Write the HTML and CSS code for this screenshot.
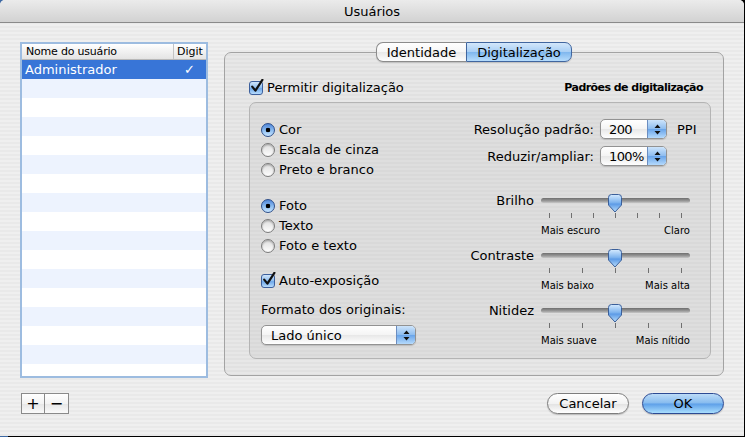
FILE: index.html
```html
<!DOCTYPE html>
<html lang="pt">
<head>
    <meta charset="UTF-8">
    <title>Usuários</title>
    <link rel="stylesheet" href="styles.css">
</head>
<body>
    <div class="window">
        <div class="titlebar">Usuários</div>

        <div class="content">
            <div class="users">
                <div class="user-list">
                    <div class="list-head">
                        <span class="col-name">Nome do usuário</span>
                        <span class="col-digit">Digit</span>
                    </div>
                    <div class="row selected">
                        <span class="col-name">Administrador</span>
                        <span class="col-digit">✓</span>
                    </div>
                    <div class="row"></div>
                    <div class="row"></div>
                    <div class="row"></div>
                    <div class="row"></div>
                    <div class="row"></div>
                    <div class="row"></div>
                    <div class="row"></div>
                    <div class="row"></div>
                    <div class="row"></div>
                    <div class="row"></div>
                    <div class="row"></div>
                    <div class="row"></div>
                    <div class="row"></div>
                    <div class="row"></div>
                    <div class="row"></div>
                    <div class="row"></div>
                </div>
                <div class="list-buttons">
                    <button class="square-button">+</button>
                    <button class="square-button">−</button>
                </div>
            </div>

            <div class="main">
                <div class="tabs">
                    <span class="tab tab-first">Identidade</span>
                    <span class="tab tab-last active">Digitalização</span>
                </div>
                <div class="tabbox">
                    <div class="scan-row">
                        <label class="option">
                            <span class="checkbox"><svg width="16" height="16" viewBox="0 0 16 16"><path d="M3.2 7.6 L6.4 11.6 L13.4 0.8" fill="none" stroke="#111" stroke-width="2.2" stroke-linecap="round" stroke-linejoin="round"/></svg></span>
                            Permitir digitalização
                        </label>
                        <span class="section-title">Padrões de digitalização</span>
                    </div>

                    <div class="group">
                        <div class="col-left">
                            <div class="option-group">
                                <label class="option"><span class="radio on"></span>Cor</label>
                                <label class="option"><span class="radio"></span>Escala de cinza</label>
                                <label class="option"><span class="radio"></span>Preto e branco</label>
                            </div>
                            <div class="option-group">
                                <label class="option"><span class="radio on"></span>Foto</label>
                                <label class="option"><span class="radio"></span>Texto</label>
                                <label class="option"><span class="radio"></span>Foto e texto</label>
                            </div>
                            <label class="option auto-exp">
                                <span class="checkbox"><svg width="16" height="16" viewBox="0 0 16 16"><path d="M3.2 7.6 L6.4 11.6 L13.4 0.8" fill="none" stroke="#111" stroke-width="2.2" stroke-linecap="round" stroke-linejoin="round"/></svg></span>
                                Auto-exposição
                            </label>
                            <div class="field-label">Formato dos originais:</div>
                            <div class="popup popup-wide">
                                <span class="popup-value">Lado único</span>
                                <span class="popup-arrows"><svg width="7" height="11" viewBox="0 0 7 11"><path d="M3.5 0.5 L6.5 4 H0.5 Z M3.5 10.5 L6.5 7 H0.5 Z" fill="#111"/></svg></span>
                            </div>
                        </div>

                        <div class="col-right">
                            <div class="popup-row">
                                <span class="row-label">Resolução padrão:</span>
                                <div class="popup">
                                    <span class="popup-value">200</span>
                                    <span class="popup-arrows"><svg width="7" height="11" viewBox="0 0 7 11"><path d="M3.5 0.5 L6.5 4 H0.5 Z M3.5 10.5 L6.5 7 H0.5 Z" fill="#111"/></svg></span>
                                </div>
                                <span class="unit">PPI</span>
                            </div>
                            <div class="popup-row second">
                                <span class="row-label">Reduzir/ampliar:</span>
                                <div class="popup">
                                    <span class="popup-value">100%</span>
                                    <span class="popup-arrows"><svg width="7" height="11" viewBox="0 0 7 11"><path d="M3.5 0.5 L6.5 4 H0.5 Z M3.5 10.5 L6.5 7 H0.5 Z" fill="#111"/></svg></span>
                                </div>
                            </div>

                            <div class="slider first">
                                <div class="slider-row">
                                    <span class="row-label">Brilho</span>
                                    <div class="track-cell">
                                        <div class="track"></div>
                                        <svg class="thumb" width="16" height="19" viewBox="0 0 16 19"><defs><linearGradient id="tg1" x1="0" y1="0" x2="0" y2="1"><stop offset="0" stop-color="#d6ebff"/><stop offset="0.45" stop-color="#7fb4ee"/><stop offset="0.55" stop-color="#5d9be6"/><stop offset="1" stop-color="#b9defc"/></linearGradient></defs><path d="M1.5 3.5 Q1.5 0.5 4.5 0.5 H11.5 Q14.5 0.5 14.5 3.5 V11 L8 18 L1.5 11 Z" fill="url(#tg1)" stroke="#3b5f99"/></svg>
                                    </div>
                                </div>
                                <div class="ticks-row">
                                    <span></span>
                                    <div class="ticks"><i></i><i></i><i></i><i></i><i></i><i></i><i></i></div>
                                </div>
                                <div class="ends-row">
                                    <span></span>
                                    <div class="ends"><span>Mais escuro</span><span>Claro</span></div>
                                </div>
                            </div>

                            <div class="slider">
                                <div class="slider-row">
                                    <span class="row-label">Contraste</span>
                                    <div class="track-cell">
                                        <div class="track"></div>
                                        <svg class="thumb" width="16" height="19" viewBox="0 0 16 19"><defs><linearGradient id="tg2" x1="0" y1="0" x2="0" y2="1"><stop offset="0" stop-color="#d6ebff"/><stop offset="0.45" stop-color="#7fb4ee"/><stop offset="0.55" stop-color="#5d9be6"/><stop offset="1" stop-color="#b9defc"/></linearGradient></defs><path d="M1.5 3.5 Q1.5 0.5 4.5 0.5 H11.5 Q14.5 0.5 14.5 3.5 V11 L8 18 L1.5 11 Z" fill="url(#tg2)" stroke="#3b5f99"/></svg>
                                    </div>
                                </div>
                                <div class="ticks-row">
                                    <span></span>
                                    <div class="ticks"><i></i><i></i><i></i><i></i><i></i></div>
                                </div>
                                <div class="ends-row">
                                    <span></span>
                                    <div class="ends"><span>Mais baixo</span><span>Mais alta</span></div>
                                </div>
                            </div>

                            <div class="slider">
                                <div class="slider-row">
                                    <span class="row-label">Nitidez</span>
                                    <div class="track-cell">
                                        <div class="track"></div>
                                        <svg class="thumb" width="16" height="19" viewBox="0 0 16 19"><defs><linearGradient id="tg3" x1="0" y1="0" x2="0" y2="1"><stop offset="0" stop-color="#d6ebff"/><stop offset="0.45" stop-color="#7fb4ee"/><stop offset="0.55" stop-color="#5d9be6"/><stop offset="1" stop-color="#b9defc"/></linearGradient></defs><path d="M1.5 3.5 Q1.5 0.5 4.5 0.5 H11.5 Q14.5 0.5 14.5 3.5 V11 L8 18 L1.5 11 Z" fill="url(#tg3)" stroke="#3b5f99"/></svg>
                                    </div>
                                </div>
                                <div class="ticks-row">
                                    <span></span>
                                    <div class="ticks"><i></i><i></i><i></i><i></i><i></i></div>
                                </div>
                                <div class="ends-row">
                                    <span></span>
                                    <div class="ends"><span>Mais suave</span><span>Mais nítido</span></div>
                                </div>
                            </div>
                        </div>
                    </div>
                </div>

                <div class="dialog-buttons">
                    <button class="pill">Cancelar</button>
                    <button class="pill default">OK</button>
                </div>
            </div>
        </div>
    </div>
</body>
</html>
```

FILE: styles.css
```css
* {
    box-sizing: border-box;
}
html, body {
    margin: 0;
}
body {
    width: 745px;
    height: 437px;
    overflow: hidden;
    background: linear-gradient(to right, #3d68a3 0, #3d68a3 8px, #000 8px);
    font-family: "DejaVu Sans", sans-serif;
    font-size: 13px;
    color: #000;
}
.window {
    width: 744px;
    height: 436px;
    border-radius: 5px 5px 0 0;
    overflow: hidden;
    background: repeating-linear-gradient(to bottom, #efefef 0, #efefef 2px, #e9e9e9 2px, #e9e9e9 4px);
}
.titlebar {
    height: 23px;
    line-height: 23px;
    text-align: center;
    background: linear-gradient(#ebebeb, #d2d2d2);
    border-bottom: 1px solid #8a8a8a;
}
.content {
    display: flex;
    gap: 16px;
    padding: 19px 0 0 20px;
}

/* user list */
.users {
    width: 188px;
}
.user-list {
    height: 336px;
    border: 2px solid #9dbce0;
    background: #fff;
    overflow: hidden;
}
.list-head {
    display: flex;
    height: 16px;
    font-size: 11px;
    line-height: 15px;
    background: linear-gradient(#fff, #f1f1f1 50%, #e4e4e4);
    border-bottom: 1px solid #b8b8b8;
}
.list-head .col-name {
    padding-left: 4px;
    letter-spacing: -0.2px;
}
.list-head .col-digit {
    border-left: 1px solid #c4c4c4;
    padding-left: 3px;
}
.col-name {
    flex: 1;
}
.col-digit {
    width: 33px;
}
.row {
    display: flex;
    height: 19px;
    line-height: 20px;
}
.row:nth-of-type(odd) {
    background: #edf3fe;
}
.row.selected {
    background: #3875d7;
    color: #fff;
}
.row .col-name {
    padding-left: 3px;
}
.row .col-digit {
    text-align: center;
}
.list-buttons {
    display: flex;
    margin: 15px 0 0 1px;
}
.square-button {
    width: 24px;
    height: 21px;
    padding: 0;
    border: 1px solid #8a8a8a;
    background: linear-gradient(#fff, #f3f3f3 50%, #e6e6e6 51%, #fafafa);
    font-family: "DejaVu Sans", sans-serif;
    font-size: 16px;
    line-height: 18px;
    color: #000;
}
.square-button + .square-button {
    border-left: none;
}

/* tabs */
.main {
    width: 500px;
}
.tabs {
    display: flex;
    justify-content: center;
    height: 20px;
    margin-bottom: -10px;
    position: relative;
    z-index: 1;
}
.tab {
    height: 20px;
    line-height: 19px;
    text-align: center;
    border: 1px solid #8c8c8c;
    background: linear-gradient(#fff, #f6f6f6 50%, #e9e9e9 52%, #fdfdfd);
    box-shadow: 0 1px 1px rgba(0, 0, 0, 0.15);
}
.tab-first {
    width: 90px;
    border-radius: 7px 0 0 7px;
    border-right: none;
}
.tab-last {
    width: 106px;
    border-radius: 0 7px 7px 0;
}
.tab.active {
    border-color: #41669f;
    background: linear-gradient(#d3e7fb, #a9cff5 48%, #80b7ee 52%, #b6dcfc);
}
.tabbox {
    height: 324px;
    border: 1px solid #a3a3a3;
    border-radius: 7px;
    background: rgba(0, 0, 0, 0.03);
    padding: 24px 12px 0 24px;
}
.scan-row {
    display: flex;
    align-items: center;
    justify-content: space-between;
    height: 20px;
    margin-right: 8px;
}
.section-title {
    font-size: 11px;
    font-weight: bold;
    letter-spacing: -0.55px;
}

/* controls */
.option {
    display: flex;
    align-items: center;
    gap: 4px;
    height: 20px;
    padding-top: 1px;
}
.checkbox {
    position: relative;
    width: 14px;
    height: 14px;
    border: 1px solid #3c5f9c;
    border-radius: 3px;
    background: linear-gradient(#cfe5fb, #8ebdef 50%, #6ea8ea 55%, #b8dcfd);
}
.checkbox svg {
    position: absolute;
    left: -1px;
    top: -3px;
}
.radio {
    width: 14px;
    height: 14px;
    border-radius: 50%;
    border: 1px solid #7c7c7c;
    background: linear-gradient(#dedede, #fdfdfd);
    box-shadow: inset 0 1px 2px rgba(0, 0, 0, 0.3);
}
.radio.on {
    border-color: #2e4f8a;
    background: radial-gradient(circle, #000 0, #000 2px, transparent 2.6px), linear-gradient(#4f86d8, #8fbff2 55%, #c6e4ff);
    box-shadow: none;
}

.group {
    display: flex;
    justify-content: space-between;
    height: 257px;
    margin-top: 5px;
    border: 1px solid #b4b4b4;
    border-radius: 7px;
    background: rgba(0, 0, 0, 0.035);
    padding: 16px 10px 0 11px;
}
.option-group + .option-group {
    margin-top: 16px;
}
.auto-exp {
    margin-top: 15px;
}
.field-label {
    height: 20px;
    line-height: 21px;
    margin-top: 9px;
}
.popup {
    display: flex;
    height: 20px;
    border: 1px solid #929292;
    border-radius: 5px;
    overflow: hidden;
    background: linear-gradient(#fff, #f4f4f4 50%, #e8e8e8 52%, #fff);
    box-shadow: 0 1px 1px rgba(0, 0, 0, 0.15);
}
.popup-wide {
    width: 155px;
    margin-top: 6px;
}
.popup-value {
    flex: 1;
    padding-left: 9px;
    line-height: 19px;
}
.popup-arrows {
    width: 19px;
    flex: none;
    display: flex;
    align-items: center;
    justify-content: center;
    border-left: 1px solid #6b8dc0;
    background: linear-gradient(#cde4fb, #8dbcef 50%, #6aa5ea 52%, #b5dafc);
}

.col-right {
    width: 260px;
}
.popup-row {
    display: grid;
    grid-template-columns: 1fr 67px 33px;
    align-items: center;
    height: 20px;
}
.popup-row.second {
    margin-top: 7px;
}
.popup-row .popup-value {
    padding-left: 8px;
    letter-spacing: -0.6px;
}
.row-label {
    text-align: right;
    padding-right: 6px;
    padding-top: 1px;
}
.unit {
    padding-left: 10px;
    padding-top: 1px;
}

.slider {
    margin: 7px 10px 0 0;
}
.slider.first {
    margin-top: 24px;
}
.slider-row, .ticks-row, .ends-row {
    display: grid;
    grid-template-columns: 1fr 149px;
}
.slider-row {
    height: 20px;
    align-items: center;
}
.slider-row .row-label {
    padding-right: 7px;
}
.track-cell {
    position: relative;
    height: 20px;
}
.track {
    margin-top: 8px;
    height: 5px;
    border-radius: 3px;
    background: linear-gradient(#6e6e6e, #9a9a9a 60%, #c8c8c8);
}
.thumb {
    position: absolute;
    left: 66px;
    top: 4px;
}
.ticks {
    display: flex;
    justify-content: space-between;
    height: 11px;
    padding: 3px 8px 0;
}
.ticks i {
    width: 1px;
    height: 5px;
    background: #707070;
}
.ends {
    display: flex;
    justify-content: space-between;
    padding-top: 3px;
    font-size: 10px;
    line-height: 14px;
}

/* dialog buttons */
.dialog-buttons {
    display: flex;
    justify-content: flex-end;
    gap: 13px;
    margin-top: 17px;
}
.pill {
    width: 82px;
    height: 21px;
    padding: 0;
    border: 1px solid #7d7d7d;
    border-radius: 11px;
    background: linear-gradient(#fff, #f2f2f2 50%, #e2e2e2 52%, #fff);
    font-family: "DejaVu Sans", sans-serif;
    font-size: 13px;
    line-height: 19px;
    color: #000;
    box-shadow: 0 1px 1px rgba(0, 0, 0, 0.2);
}
.pill.default {
    border-color: #2c4a93;
    background: linear-gradient(#bcdbf7, #86bbef 48%, #5d9fe8 52%, #a9defe);
}
```
